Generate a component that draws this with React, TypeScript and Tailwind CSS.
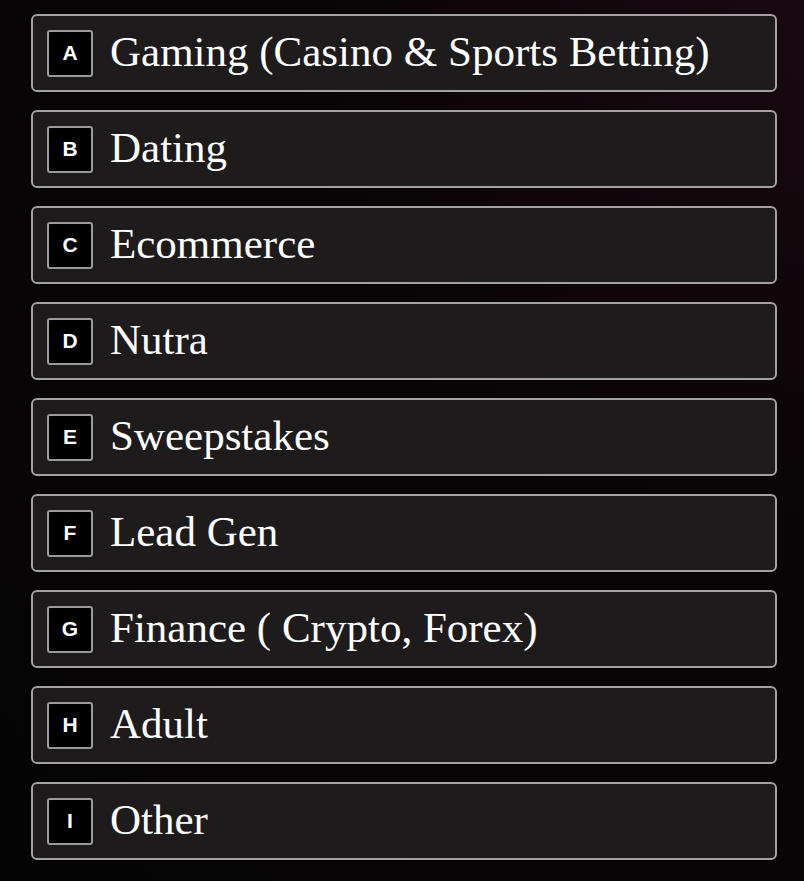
const options = [
  { key: "A", label: "Gaming (Casino & Sports Betting)" },
  { key: "B", label: "Dating" },
  { key: "C", label: "Ecommerce" },
  { key: "D", label: "Nutra" },
  { key: "E", label: "Sweepstakes" },
  { key: "F", label: "Lead Gen" },
  { key: "G", label: "Finance ( Crypto, Forex)" },
  { key: "H", label: "Adult" },
  { key: "I", label: "Other" },
];

export default function App() {
  return (
    <main className="min-h-[881px] w-full bg-[radial-gradient(ellipse_at_top_right,#1a0810_0%,#080506_45%,#050405_100%)] pt-[14px] pl-[31px] pr-[27px]">
      <div className="flex flex-col gap-[18px]">
        {options.map((opt) => (
          <button
            key={opt.key}
            type="button"
            className="flex h-[78px] w-full items-center gap-[17px] rounded-[6px] border-2 border-[#a3a1a2] bg-[#1e1b1c] pl-[14px] text-left"
          >
            <span
              className="flex h-[47px] w-[46px] shrink-0 items-center justify-center rounded-[3px] border-2 border-[#9c9a9b] bg-black text-[21px] font-bold text-white"
              style={{ fontFamily: '"Liberation Sans", Arial, sans-serif' }}
            >
              {opt.key}
            </span>
            <span
              className="pb-[4px] text-[43px] leading-none text-white"
              style={{ fontFamily: '"Liberation Serif", "Times New Roman", serif' }}
            >
              {opt.label}
            </span>
          </button>
        ))}
      </div>
    </main>
  );
}
